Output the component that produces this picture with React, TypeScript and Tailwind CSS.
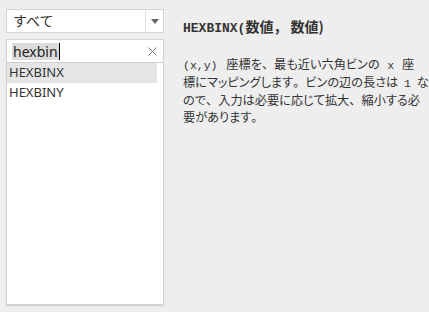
import React from "react";

function P({ children }: { children: React.ReactNode }) {
  return <span className="[font-feature-settings:normal]">{children}</span>;
}

function Code({ children, cls }: { children: React.ReactNode; cls: string }) {
  return <code className={cls + " text-[11.5px] font-['Liberation_Mono',monospace]"}>{children}</code>;
}

export default function App() {
  return (
    <div className="w-[429px] h-[312px] bg-[#eeeeee] flex overflow-hidden font-['Noto_Sans','Noto_Sans_CJK_JP',sans-serif]">
      <div className="w-[158px] ml-[6px] mt-[9px] flex flex-col">
        <div className="h-[24px] bg-white border border-[#d4d4d4] flex items-center">
          <span className="flex-1 pl-[6px] text-[14px] text-[#333] leading-none">すべて</span>
          <div className="w-[18px] h-full border-l border-[#e2e2e2] flex items-center justify-center">
            <svg width="8" height="5" viewBox="0 0 8 5"><path d="M0 0h8L4 5z" fill="#666" /></svg>
          </div>
        </div>
        <div className="mt-[6px] h-[266px] bg-white border border-[#d4d4d4] shadow-[0_1px_1px_rgba(0,0,0,0.12)] flex flex-col">
          <div className="h-[23px] border-b border-[#cfcfcf] flex items-center pl-[5px] pr-[6px]">
            <span className="text-[14px] text-[#222] leading-[17px] bg-[#dcdcdc] px-[1px]">hexbin</span>
            <span className="w-[1px] h-[17px] bg-black"></span>
            <span className="flex-1"></span>
            <svg width="9" height="9" viewBox="0 0 9 9"><path d="M0.5 0.5l8 8M8.5 0.5l-8 8" stroke="#777" strokeWidth="1" /></svg>
          </div>
          <div className="pr-[6px]">
            <div className="h-[20px] bg-[#e5e5e5] flex items-center pl-[2px] text-[13px] text-[#333]">HEXBINX</div>
            <div className="h-[20px] flex items-center pl-[2px] text-[13px] text-[#333]">HEXBINY</div>
          </div>
        </div>
      </div>
      <div className="ml-[19px] mt-[18px] w-[240px] text-[#333]">
        <div className="font-bold leading-[17px] whitespace-nowrap">
          <span className="text-[13px] font-['Liberation_Mono',monospace]">HEXBINX(</span>
          <span className="text-[14px] font-['Noto_Sans_CJK_JP',sans-serif]">数値，&nbsp;数値)</span>
        </div>
        <div className="mt-[19px] text-[12.2px] leading-[17px] whitespace-nowrap font-['Noto_Sans_CJK_JP',sans-serif] [font-feature-settings:'palt']">
          <div>
            <Code cls="pr-[6px]">(x,y)</Code> 座標を<P>、</P>最も近い六角ビンの <Code cls="px-[5px]">x</Code> 座
          </div>
          <div>
            標にマッピングします<P>。</P>ビンの辺の長さは <Code cls="px-[3px]">1</Code> な
          </div>
          <div>
            ので<P>、</P>入力は必要に応じて拡大<P>、</P>縮小する必
          </div>
          <div>
            要があります<P>。</P>
          </div>
        </div>
      </div>
    </div>
  );
}
